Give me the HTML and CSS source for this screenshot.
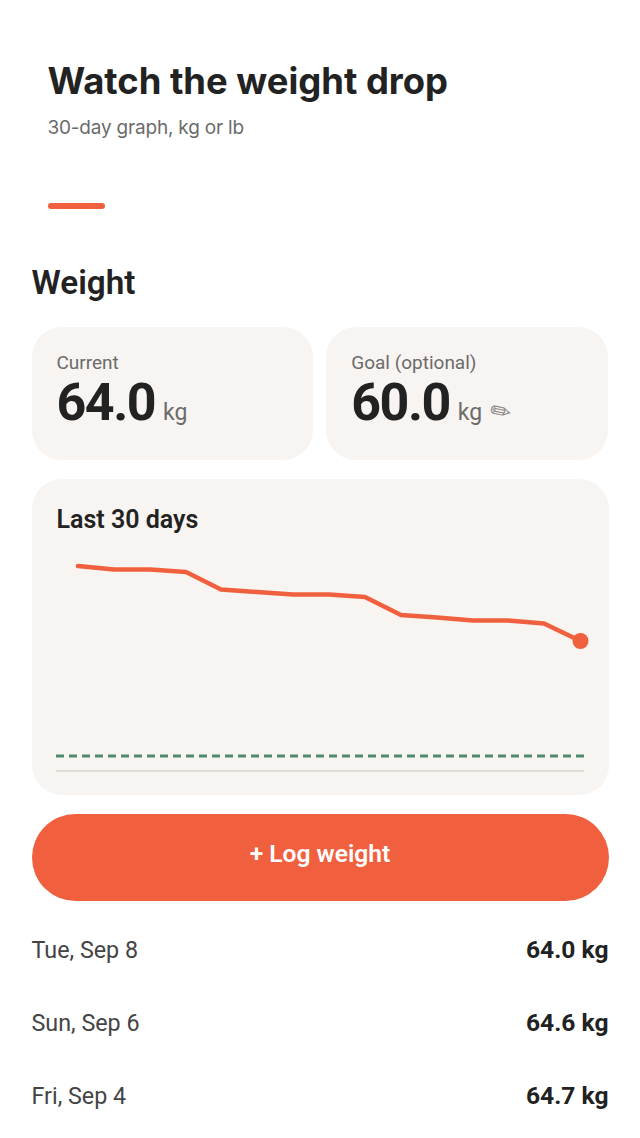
FILE: index.html
```html
<!DOCTYPE html>
<html lang="en">
<head>
    <meta charset="UTF-8">
    <meta name="viewport" content="width=device-width, initial-scale=1.0">
    <title>Weight</title>
    <link rel="stylesheet" href="styles.css">
</head>
<body>
    <div class="hero">
        <h1>Watch the weight drop</h1>
        <p>30-day graph, kg or lb</p>
        <div class="accent"></div>
    </div>

    <div class="content">
        <h2>Weight</h2>

        <div class="stats">
            <div class="stat">
                <div class="stat-label">Current</div>
                <div class="stat-value">64.0<span class="unit">kg</span></div>
            </div>
            <div class="stat">
                <div class="stat-label">Goal (optional)</div>
                <div class="stat-value">60.0<span class="unit">kg</span><span class="edit">✏</span></div>
            </div>
        </div>

        <div class="chart-card">
            <div class="chart-title">Last 30 days</div>
            <svg class="chart" width="528" height="240" viewBox="0 0 528 240">
                <line class="baseline" x1="0" y1="231" x2="528" y2="231"></line>
                <line class="goal" x1="0" y1="216" x2="528" y2="216"></line>
                <polyline class="trend" points="22,26 58,29.5 94,29.5 130,32 165,49.5 201,52 237,54.5 273,54.5 309,57 345,75 381,77.5 417,80.5 452,80.5 488,83.5 524.5,101"></polyline>
                <circle class="last" cx="524.5" cy="101" r="8"></circle>
            </svg>
        </div>

        <button class="log-btn">+ Log weight</button>

        <div class="history">
            <div class="history-row">
                <span>Tue, Sep 8</span>
                <span class="history-value">64.0 kg</span>
            </div>
            <div class="history-row">
                <span>Sun, Sep 6</span>
                <span class="history-value">64.6 kg</span>
            </div>
            <div class="history-row">
                <span>Fri, Sep 4</span>
                <span class="history-value">64.7 kg</span>
            </div>
        </div>
    </div>
</body>
</html>
```

FILE: styles.css
```css
* {
    margin: 0;
    padding: 0;
    box-sizing: border-box;
}

html, body {
    width: 100%;
    height: 100%;
    overflow: hidden;
    background: #ffffff;
    font-family: Roboto, "Liberation Sans", sans-serif;
    color: #222222;
}

.hero {
    padding: 58px 47.5px 0;
    font-family: Inter, "Liberation Sans", sans-serif;
}

.hero h1 {
    font-size: 36.4px;
    line-height: 46px;
    font-weight: 700;
    color: #222222;
}

.hero p {
    margin-top: 11px;
    font-size: 19px;
    line-height: 26px;
    letter-spacing: -0.2px;
    color: #6b6b6b;
}

.accent {
    width: 57px;
    height: 6px;
    margin-top: 62px;
    border-radius: 3px;
    background: #f1603e;
}

.content {
    padding: 0 31.5px;
}

.content h2 {
    margin-top: 52px;
    font-size: 33.3px;
    line-height: 44px;
    font-weight: 600;
    color: #222222;
}

.stats {
    display: flex;
    gap: 13px;
    margin-top: 22px;
    margin-right: 0.5px;
}

.stat {
    flex: 1;
    height: 133px;
    padding: 24px 25px 0;
    border-radius: 30px;
    background: #f8f4f1;
}

.stat-label {
    font-size: 19px;
    line-height: 24px;
    font-weight: 450;
    color: #6b6b6b;
}

.stat-value {
    display: flex;
    align-items: baseline;
    gap: 8px;
    font-size: 52px;
    line-height: 56px;
    font-weight: 700;
    letter-spacing: -1.5px;
    color: #222222;
}

.unit {
    font-size: 23px;
    font-weight: 400;
    letter-spacing: 0;
    color: #6b6b6b;
}

.edit {
    display: inline-block;
    font-family: "DejaVu Sans", sans-serif;
    font-size: 25px;
    font-weight: 400;
    letter-spacing: 0;
    color: #8a8a8a;
    transform: rotate(12deg);
}

.chart-card {
    height: 316px;
    margin-top: 19px;
    padding: 25px 25px 0;
    border-radius: 30px;
    background: #f8f4f1;
}

.chart-title {
    font-size: 25px;
    line-height: 32px;
    font-weight: 600;
    color: #222222;
}

.chart {
    display: block;
    margin: 4px 0 0 -0.5px;
    overflow: visible;
}

.trend {
    fill: none;
    stroke: #f1603e;
    stroke-width: 4.5;
    stroke-linecap: round;
    stroke-linejoin: round;
}

.last {
    fill: #f1603e;
}

.goal {
    stroke: #4f8a6d;
    stroke-width: 3;
    stroke-dasharray: 8 5;
}

.baseline {
    stroke: #e0dcd8;
    stroke-width: 2;
}

.log-btn {
    display: block;
    width: 100%;
    height: 87px;
    margin-top: 19px;
    padding-bottom: 8px;
    border: none;
    border-radius: 44px;
    background: #f1603e;
    color: #ffffff;
    font-family: inherit;
    font-size: 24.6px;
    font-weight: 600;
}

.history {
    margin-top: 12px;
}

.history-row {
    display: flex;
    align-items: center;
    justify-content: space-between;
    height: 73px;
    font-size: 23.3px;
    color: #444444;
}

.history-value {
    font-size: 24.6px;
    font-weight: 700;
    color: #222222;
}
```
